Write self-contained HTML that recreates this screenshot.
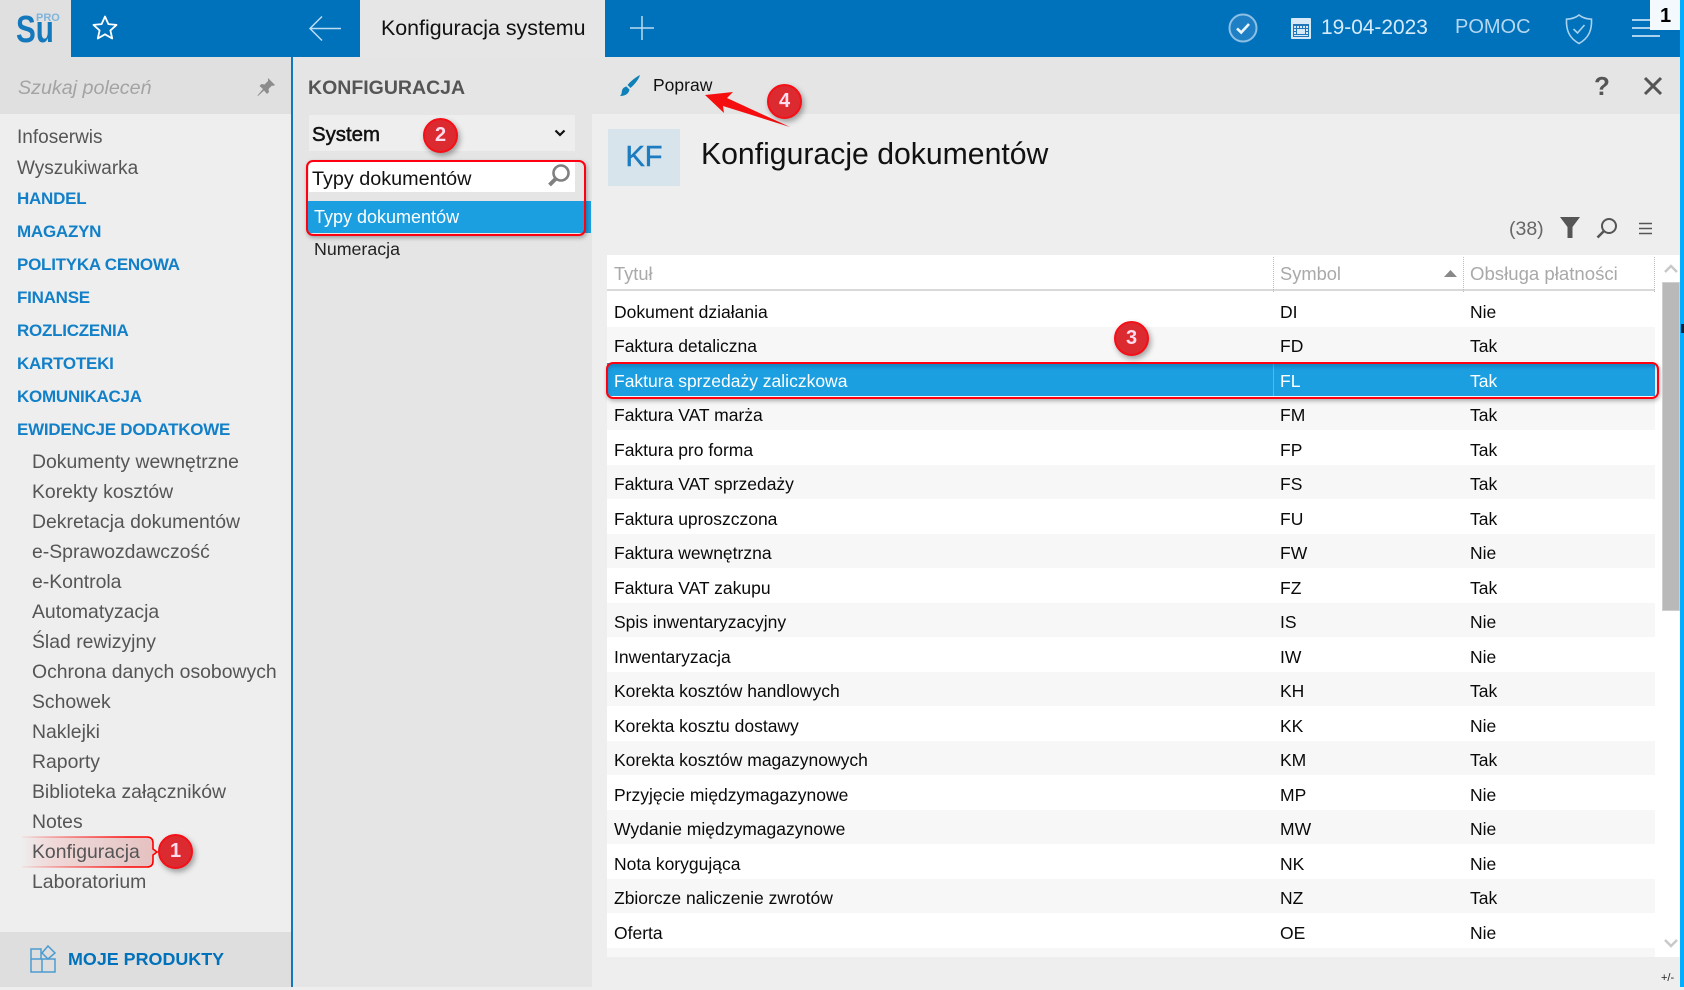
<!DOCTYPE html>
<html lang="pl"><head><meta charset="utf-8"><title>Konfiguracja systemu</title>
<style>
html,body{margin:0;padding:0;background:#eee}
body{position:relative;width:1684px;height:987px;overflow:hidden;font-family:"Liberation Sans",sans-serif;color:#111}
div{position:absolute}
.t{position:absolute;white-space:nowrap;line-height:24px;height:24px;margin-top:-12px}
.s{font-size:19.4px;color:#555;left:32px}
.h{font-size:17px;letter-spacing:-.25px;font-weight:bold;color:#1280c8;left:17px}
.p{font-size:19px;color:#555;left:17px}
.r{font-size:17.5px;color:#0a0a0a}
.w{color:#fff}
.th{font-size:18.3px;color:#a9a9a9}
.b{width:31px;height:31px;border-radius:50%;background:#dc2b30;border:2px solid #f50f17;box-shadow:2px 3px 6px rgba(0,0,0,.35);font-size:20px;font-weight:bold;text-align:center;line-height:31px;z-index:9;color:#fde}
.alt{left:607px;width:1048px;height:34.5px;background:#f7f7f7}
svg{position:absolute;overflow:visible}
</style></head><body>
<div style="left:0;top:0;width:71px;height:57px;background:#e0e0e0"></div>
<div style="left:71px;top:0;width:289px;height:57px;background:#0071bb"></div>
<div style="left:360px;top:0;width:245px;height:57px;background:#e6e6e6"></div>
<div style="left:605px;top:0;width:1075px;height:57px;background:#0071bb"></div>
<div style="left:0;top:57px;width:291px;height:57px;background:#e0e0e0"></div>
<div style="left:0;top:114px;width:291px;height:818px;background:#eee"></div>
<div style="left:0;top:932px;width:291px;height:55px;background:#dedede"></div>
<div style="left:291px;top:57px;width:2px;height:930px;background:#1277bc"></div>
<div style="left:293px;top:57px;width:299px;height:930px;background:#e5e5e5"></div>
<div style="left:592px;top:57px;width:1088px;height:57px;background:#e5e5e5"></div>
<div style="left:592px;top:114px;width:1088px;height:873px;background:#eee"></div>
<div style="left:1680px;top:0;width:4px;height:987px;background:#00adff"></div>
<div style="left:1681px;top:324px;width:3px;height:9px;background:#123"></div>

<span class="t" style="left:16px;top:30px;font-size:38px;height:40px;line-height:40px;margin-top:-20px;color:#1478bd;transform:scaleX(.78);transform-origin:0 50%;font-weight:bold">Su</span>
<span class="t" style="left:36px;top:18px;font-size:11px;font-weight:bold;color:#7fb4dc">PRO</span>
<svg style="left:91px;top:14px" width="28" height="28" viewBox="0 0 28 28"><path d="M14 2.5l3.4 7.6 8.1.8-6.1 5.5 1.8 8.1L14 20.3l-7.2 4.2 1.8-8.1-6.1-5.5 8.1-.8z" fill="none" stroke="#fff" stroke-width="1.8" stroke-linejoin="round"/></svg>
<svg style="left:308px;top:14px" width="34" height="28" viewBox="0 0 34 28"><path d="M33 14.5H2M14 2.500 2 14.500 14 26.500" fill="none" stroke="#bcdcf2" stroke-width="1.500"/></svg>
<span class="t" style="left:381px;top:28px;font-size:21.4px;color:#111">Konfiguracja systemu</span>
<svg style="left:630px;top:16px" width="24" height="24"><path d="M12 0V24M0 12H24" stroke="#bcdcf2" stroke-width="1.500" fill="none"/></svg>

<svg style="left:1228px;top:13px" width="30" height="30" viewBox="0 0 30 30"><circle cx="15" cy="15" r="13.500" fill="#1f7fc4" stroke="#8cc0e4" stroke-width="2"/><path d="M9 15.500l4.200 4L21 11" fill="none" stroke="#eaf5fc" stroke-width="2.600"/></svg>
<svg style="left:1291px;top:18px" width="21" height="22" viewBox="0 0 21 22"><rect x="0" y="0" width="20" height="21" rx="1" fill="#d7e9f6"/><rect x="2" y="6" width="16" height="13" fill="#2277bb"/><g fill="#d7e9f6"><rect x="3" y="8" width="2" height="2"/><rect x="6" y="8" width="2" height="2"/><rect x="9" y="8" width="2" height="2"/><rect x="12" y="8" width="2" height="2"/><rect x="15" y="8" width="2" height="2"/><rect x="3" y="11" width="2" height="2"/><rect x="6" y="11" width="8" height="5"/><rect x="15" y="11" width="2" height="2"/><rect x="3" y="14" width="2" height="2"/><rect x="15" y="14" width="2" height="2"/><rect x="3" y="17" width="14" height="1"/></g></svg>
<span class="t" style="left:1321px;top:28px;font-size:20.9px;color:#d5ebfa">19-04-2023</span>
<span class="t" style="left:1455px;top:27px;font-size:20px;color:#b5d8f0">POMOC</span>
<svg style="left:1564px;top:13px" width="30" height="32" viewBox="0 0 30 32"><path d="M15 2c3 2.500 7 4 12.500 4.200C28 17 25 25 15 30.500 5 25 2 17 2.500 6.200 8 6 12 4.500 15 2z" fill="none" stroke="#a9d2ee" stroke-width="1.600"/><path d="M9.500 16l4 4 7-8" fill="none" stroke="#a9d2ee" stroke-width="1.600"/></svg>
<div style="left:1632px;top:19px;width:28px;height:2px;background:#a9d2ee"></div>
<div style="left:1632px;top:27px;width:28px;height:2px;background:#a9d2ee"></div>
<div style="left:1632px;top:35px;width:28px;height:2px;background:#a9d2ee"></div>
<div style="left:1650px;top:0;width:30px;height:30px;background:#f3f9fd"></div>
<span class="t" style="left:1660px;top:16px;font-size:20px;font-weight:bold;color:#000">1</span>

<span class="t" style="left:18px;top:88px;font-size:19.7px;font-style:italic;color:#a3a3a3">Szukaj poleceń</span>
<svg style="left:256px;top:77px" width="20" height="20" viewBox="0 0 20 20"><path d="M12 1l7 7-2 1-1-.500-3.500 3.500.500 3-2 2-3-3.500L2 19l-.500-.500L7 12 3.500 9l2-2 3 .5L12 4z" fill="#8c8c8c"/></svg>

<span class="t p" style="top:138px">Infoserwis</span>
<span class="t p" style="top:168.500px">Wyszukiwarka</span>
<span class="t h" style="top:199px">HANDEL</span>
<span class="t h" style="top:231.500px">MAGAZYN</span>
<span class="t h" style="top:264.500px">POLITYKA CENOWA</span>
<span class="t h" style="top:297.500px">FINANSE</span>
<span class="t h" style="top:331px">ROZLICZENIA</span>
<span class="t h" style="top:363.500px">KARTOTEKI</span>
<span class="t h" style="top:397px">KOMUNIKACJA</span>
<span class="t h" style="top:430px">EWIDENCJE DODATKOWE</span>
<span class="t s" style="top:462px">Dokumenty wewnętrzne</span>
<span class="t s" style="top:492px">Korekty kosztów</span>
<span class="t s" style="top:522px">Dekretacja dokumentów</span>
<span class="t s" style="top:552px">e-Sprawozdawczość</span>
<span class="t s" style="top:582px">e-Kontrola</span>
<span class="t s" style="top:612px">Automatyzacja</span>
<span class="t s" style="top:642px">Ślad rewizyjny</span>
<span class="t s" style="top:672px">Ochrona danych osobowych</span>
<span class="t s" style="top:702px">Schowek</span>
<span class="t s" style="top:732px">Naklejki</span>
<span class="t s" style="top:762px">Raporty</span>
<span class="t s" style="top:792px">Biblioteka załączników</span>
<span class="t s" style="top:822px">Notes</span>
<span class="t s" style="top:852px;z-index:3">Konfiguracja</span>
<span class="t s" style="top:882px">Laboratorium</span>
<svg style="left:0;top:830px" width="170" height="44"><defs><linearGradient id="f" x1="0" x2="1"><stop offset="0" stop-color="#f88" stop-opacity="0"/><stop offset=".5" stop-color="#e9c0c0" stop-opacity=".6"/><stop offset="1" stop-color="#e2b0b0" stop-opacity=".75"/></linearGradient><linearGradient id="g" gradientUnits="userSpaceOnUse" x1="22" x2="130" y1="0" y2="0"><stop offset="0" stop-color="#f00" stop-opacity=".05"/><stop offset="1" stop-color="#f00"/></linearGradient></defs><path d="M22 7H147q6 0 6 6v6l4 3-4 3v6q0 6-6 6H22" fill="url(#f)" stroke="url(#g)" stroke-width="1.600"/></svg>
<svg style="left:30px;top:945px" width="27" height="28" viewBox="0 0 27 28"><g fill="none" stroke="#4b9bd0" stroke-width="1.500"><path d="M1 4H11V14H1zM1 14H12V27H1zM12 14H25V27H12z"/><path d="M18 1l7 7-7 6-6-6z"/></g></svg>
<span class="t" style="left:68px;top:959px;font-size:17.9px;font-weight:bold;color:#0071bb">MOJE PRODUKTY</span>

<span class="t" style="left:308px;top:88px;font-size:19.5px;font-weight:bold;color:#555">KONFIGURACJA</span>
<div style="left:309px;top:115px;width:266px;height:36px;background:#eee"></div>
<span class="t" style="left:312px;top:135px;font-size:20.4px;color:#111;-webkit-text-stroke:.5px #111">System</span>
<svg style="left:554px;top:129px" width="12" height="9"><path d="M1.500 1.500L6 6l4.500-4.500" fill="none" stroke="#111" stroke-width="2.200"/></svg>
<div style="left:309px;top:162px;width:266px;height:30px;background:#fff"></div>
<span class="t" style="left:312px;top:179px;font-size:19.8px;color:#111">Typy dokumentów</span>
<svg style="left:546px;top:163px" width="26" height="26" viewBox="0 0 26 26"><circle cx="15" cy="10" r="7.500" fill="none" stroke="#808080" stroke-width="2.600"/><path d="M10 15.500L3.500 22" stroke="#808080" stroke-width="4"/></svg>
<div style="left:308px;top:201px;width:283px;height:32px;background:#1b9fe1"></div>
<span class="t w" style="left:314px;top:217px;font-size:18px">Typy dokumentów</span>
<span class="t" style="left:314px;top:249px;font-size:17.8px;color:#222">Numeracja</span>
<div style="left:306px;top:160px;width:276px;height:72px;border:2px solid #f01;border-radius:7px;box-shadow:1px 2px 4px rgba(0,0,0,.3)"></div>

<svg style="left:619px;top:74px" width="22" height="24" viewBox="0 0 22 24"><path d="M21 1c-1 4-5 9-9.500 13L8.500 11C12 7 17 3 21 1zM7.500 12.500l3 3C10 19 7 22 1 22c2-2 1.500-3.500 2-5.500.5-2.200 2.500-3.700 4.500-4z" fill="#1080b8"/></svg>
<span class="t" style="left:653px;top:85px;font-size:17.5px;color:#111">Popraw</span>
<span class="t" style="left:1594px;top:86px;font-size:26px;font-weight:bold;color:#555">?</span>
<svg style="left:1643px;top:76px" width="20" height="20"><path d="M2 2L18 18M18 2L2 18" stroke="#555" stroke-width="3" fill="none"/></svg>
<div style="left:608px;top:129px;width:72px;height:57px;background:#d7e4ec"></div>
<span class="t" style="left:608px;top:157px;width:72px;text-align:center;font-size:29px;color:#1c7cbf;height:34px;line-height:34px;margin-top:-17px;-webkit-text-stroke:.5px #1c7cbf">KF</span>
<span class="t" style="left:701px;top:155px;font-size:30.2px;color:#111;height:36px;line-height:36px;margin-top:-18px">Konfiguracje dokumentów</span>

<span class="t" style="left:1509px;top:229px;font-size:19.5px;color:#666">(38)</span>
<svg style="left:1560px;top:217px" width="20" height="21" viewBox="0 0 20 21"><path d="M0 0H20L12.500 10V21H7.500V10z" fill="#555"/></svg>
<svg style="left:1596px;top:217px" width="22" height="22" viewBox="0 0 22 22"><circle cx="13" cy="9" r="7" fill="none" stroke="#555" stroke-width="2"/><path d="M8 14L1.500 20.500" stroke="#555" stroke-width="2.600"/></svg>
<svg style="left:1639px;top:222px" width="14" height="13"><path d="M0 1.500H13M0 6.500H13M0 11.500H13" stroke="#555" stroke-width="1.400"/></svg>

<div style="left:607px;top:255px;width:1073px;height:702px;background:#fff"></div>
<div style="left:607px;top:289px;width:1048px;height:2px;background:#d9d9d9"></div>
<div style="left:1273px;top:257px;height:35px;border-left:1px dotted #bbb"></div>
<div style="left:1463px;top:257px;height:35px;border-left:1px dotted #bbb"></div>
<div style="left:1654px;top:257px;height:35px;border-left:1px dotted #bbb"></div>
<span class="t th" style="left:614px;top:274px">Tytuł</span>
<span class="t th" style="left:1280px;top:274px">Symbol</span>
<span class="t th" style="left:1470px;top:274px;font-size:18.6px">Obsługa płatności</span>
<svg style="left:1444px;top:270px" width="13" height="7"><path d="M0 7L6.500 0 13 7z" fill="#888"/></svg>

<div class="alt" style="top:326.700px"></div>
<div class="alt" style="top:395.700px"></div>
<div class="alt" style="top:464.700px"></div>
<div class="alt" style="top:533.700px"></div>
<div class="alt" style="top:602.700px"></div>
<div class="alt" style="top:671.700px"></div>
<div class="alt" style="top:740.700px"></div>
<div class="alt" style="top:809.700px"></div>
<div class="alt" style="top:878.700px"></div>
<div class="alt" style="top:947.700px;height:9.300px"></div>
<div style="left:607px;top:363px;width:1048px;height:33px;background:#1b9fe1"></div>
<div style="left:1273px;top:363px;width:1px;height:33px;background:#58b8ea"></div>
<div style="left:606px;top:362px;width:1049px;height:33px;border:2px solid #f01;border-radius:7px;box-shadow:1px 2px 4px rgba(0,0,0,.3) ,inset 0 3px 3px rgba(0,70,130,.3)"></div>

<span class="t r" style="left:614px;top:311.500px">Dokument działania</span><span class="t r" style="left:1280px;top:311.500px">DI</span><span class="t r" style="left:1470px;top:311.500px">Nie</span>
<span class="t r" style="left:614px;top:345.500px">Faktura detaliczna</span><span class="t r" style="left:1280px;top:345.500px">FD</span><span class="t r" style="left:1470px;top:345.500px">Tak</span>
<span class="t r w" style="left:614px;top:380.500px">Faktura sprzedaży zaliczkowa</span><span class="t r w" style="left:1280px;top:380.500px">FL</span><span class="t r w" style="left:1470px;top:380.500px">Tak</span>
<span class="t r" style="left:614px;top:414.500px">Faktura VAT marża</span><span class="t r" style="left:1280px;top:414.500px">FM</span><span class="t r" style="left:1470px;top:414.500px">Tak</span>
<span class="t r" style="left:614px;top:449.500px">Faktura pro forma</span><span class="t r" style="left:1280px;top:449.500px">FP</span><span class="t r" style="left:1470px;top:449.500px">Tak</span>
<span class="t r" style="left:614px;top:484px">Faktura VAT sprzedaży</span><span class="t r" style="left:1280px;top:484px">FS</span><span class="t r" style="left:1470px;top:484px">Tak</span>
<span class="t r" style="left:614px;top:518.500px">Faktura uproszczona</span><span class="t r" style="left:1280px;top:518.500px">FU</span><span class="t r" style="left:1470px;top:518.500px">Tak</span>
<span class="t r" style="left:614px;top:553px">Faktura wewnętrzna</span><span class="t r" style="left:1280px;top:553px">FW</span><span class="t r" style="left:1470px;top:553px">Nie</span>
<span class="t r" style="left:614px;top:587.500px">Faktura VAT zakupu</span><span class="t r" style="left:1280px;top:587.500px">FZ</span><span class="t r" style="left:1470px;top:587.500px">Tak</span>
<span class="t r" style="left:614px;top:622px">Spis inwentaryzacyjny</span><span class="t r" style="left:1280px;top:622px">IS</span><span class="t r" style="left:1470px;top:622px">Nie</span>
<span class="t r" style="left:614px;top:656.500px">Inwentaryzacja</span><span class="t r" style="left:1280px;top:656.500px">IW</span><span class="t r" style="left:1470px;top:656.500px">Nie</span>
<span class="t r" style="left:614px;top:691px">Korekta kosztów handlowych</span><span class="t r" style="left:1280px;top:691px">KH</span><span class="t r" style="left:1470px;top:691px">Tak</span>
<span class="t r" style="left:614px;top:725.500px">Korekta kosztu dostawy</span><span class="t r" style="left:1280px;top:725.500px">KK</span><span class="t r" style="left:1470px;top:725.500px">Nie</span>
<span class="t r" style="left:614px;top:760px">Korekta kosztów magazynowych</span><span class="t r" style="left:1280px;top:760px">KM</span><span class="t r" style="left:1470px;top:760px">Tak</span>
<span class="t r" style="left:614px;top:794.500px">Przyjęcie międzymagazynowe</span><span class="t r" style="left:1280px;top:794.500px">MP</span><span class="t r" style="left:1470px;top:794.500px">Nie</span>
<span class="t r" style="left:614px;top:829px">Wydanie międzymagazynowe</span><span class="t r" style="left:1280px;top:829px">MW</span><span class="t r" style="left:1470px;top:829px">Nie</span>
<span class="t r" style="left:614px;top:863.500px">Nota korygująca</span><span class="t r" style="left:1280px;top:863.500px">NK</span><span class="t r" style="left:1470px;top:863.500px">Nie</span>
<span class="t r" style="left:614px;top:898px">Zbiorcze naliczenie zwrotów</span><span class="t r" style="left:1280px;top:898px">NZ</span><span class="t r" style="left:1470px;top:898px">Tak</span>
<span class="t r" style="left:614px;top:932.500px">Oferta</span><span class="t r" style="left:1280px;top:932.500px">OE</span><span class="t r" style="left:1470px;top:932.500px">Nie</span>

<div style="left:1662px;top:282px;width:16px;height:327px;background:#b9b9b9;border:1px solid #cfcfcf"></div>
<svg style="left:1664px;top:264px" width="14" height="9"><path d="M1 8L7 2l6 6" fill="none" stroke="#c8c8c8" stroke-width="2.400"/></svg>
<svg style="left:1664px;top:939px" width="14" height="9"><path d="M1 1l6 6 6-6" fill="none" stroke="#c8c8c8" stroke-width="2.400"/></svg>
<span class="t" style="left:1661px;top:978px;font-size:11px;color:#222">+/-</span>

<svg style="left:700px;top:88px;z-index:8" width="92" height="42" viewBox="700 88 92 42"><path d="M705 95L733 92 727 98 790 127 723 106 724 113z" fill="#f50e10"/></svg>
<div class="b" style="left:158px;top:834px">1</div>
<div class="b" style="left:423px;top:118px">2</div>
<div class="b" style="left:1114px;top:321px">3</div>
<div class="b" style="left:767px;top:84px">4</div>
</body></html>
